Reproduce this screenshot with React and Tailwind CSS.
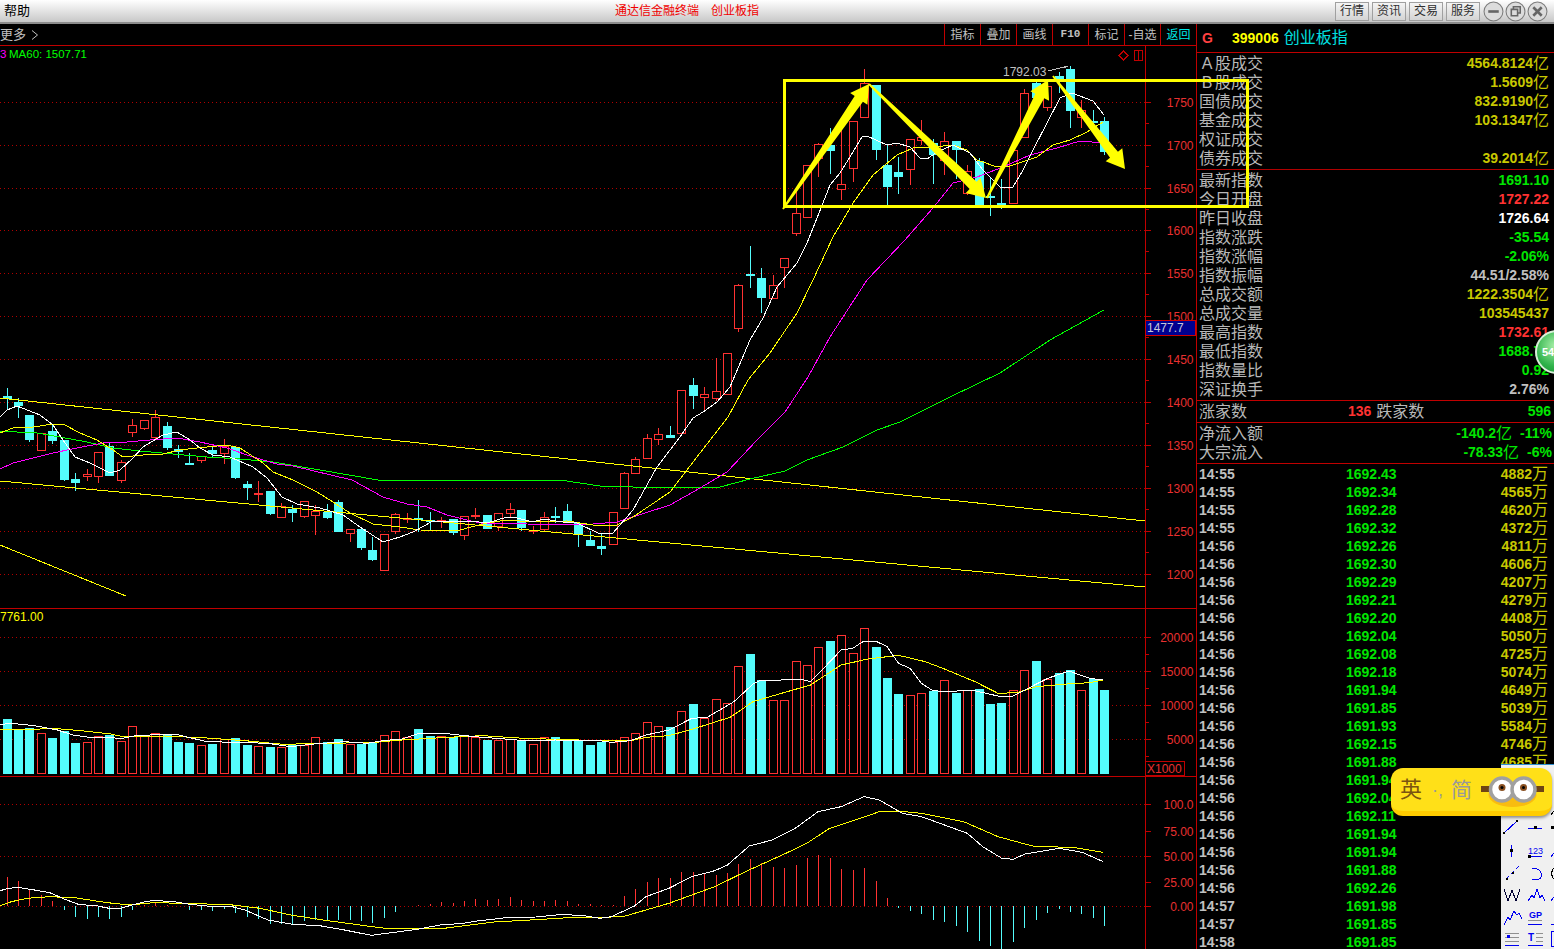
import React from 'react';

const RED = '#ff3232';
const CYAN = '#54fcfc';
const GRID = '#b00000';
const AXIS = '#c00000';
const CJK = "'Liberation Sans','Noto Sans CJK SC',sans-serif";

const X = (k) => Math.round(1104.3 - 11.435 * k) + 0.5;

// k counts from the newest candle: [colour, high, top, bottom, low] in page pixels
const CANDLES = [
  ['c', 117, 121, 152, 155], ['c', 110, 121, 122, 128], ['r', 100, 110, 117, 128], ['c', 66, 69, 111, 128],
  ['c', 72, 76, 79, 93], ['r', 84, 86, 107, 111], ['c', 80, 83, 98, 98], ['r', 89, 93, 137, 137],
  ['r', 150, 150, 203, 204], ['c', 179, 203, 205, 209], ['c', 178, 196, 198, 216], ['c', 158, 161, 205, 205],
  ['r', 165, 171, 193, 195], ['c', 141, 141, 150, 179], ['r', 132, 141, 160, 175], ['c', 139, 143, 155, 184],
  ['r', 120, 137, 140, 145], ['r', 139, 139, 169, 185], ['c', 157, 172, 177, 194], ['c', 145, 165, 187, 205],
  ['c', 85, 85, 150, 160], ['r', 69, 83, 117, 117], ['r', 121, 121, 168, 182], ['r', 127, 184, 189, 200],
  ['c', 128, 145, 151, 174], ['r', 143, 144, 158, 177], ['r', 165, 165, 217, 218], ['r', 188, 213, 233, 236],
  ['r', 258, 258, 267, 288], ['r', 275, 285, 298, 298], ['c', 268, 278, 298, 313], ['c', 246, 274, 276, 288],
  ['r', 284, 285, 328, 332], ['r', 353, 353, 394, 395], ['r', 358, 391, 398, 401], ['r', 387, 394, 397, 411],
  ['c', 378, 385, 396, 409], ['r', 390, 390, 433, 433], ['c', 426, 435, 438, 438], ['r', 428, 434, 439, 445],
  ['r', 434, 438, 458, 459], ['r', 457, 459, 473, 473], ['r', 472, 473, 508, 508], ['r', 512, 512, 544, 544],
  ['c', 533, 546, 549, 555], ['c', 531, 540, 546, 546], ['c', 523, 523, 535, 547], ['c', 504, 511, 523, 523],
  ['c', 507, 516, 517, 523], ['r', 512, 517, 529, 532], ['r', 526, 530, 531, 534], ['c', 510, 510, 528, 531],
  ['r', 503, 509, 513, 517], ['r', 513, 513, 526, 531], ['c', 515, 515, 529, 529], ['r', 508, 515, 516, 519],
  ['r', 516, 516, 535, 540], ['c', 519, 519, 533, 535], ['r', 517, 520, 521, 528], ['c', 512, 520, 521, 530],
  ['c', 500, 518, 519, 532], ['r', 513, 518, 519, 523], ['r', 513, 514, 531, 534], ['r', 534, 534, 570, 570],
  ['c', 537, 550, 560, 561], ['c', 529, 529, 548, 550], ['r', 529, 529, 533, 542], ['c', 500, 502, 532, 532],
  ['c', 504, 512, 518, 519], ['r', 505, 511, 515, 535], ['r', 501, 501, 516, 518], ['c', 505, 509, 513, 522],
  ['r', 503, 506, 517, 517], ['c', 491, 491, 514, 515], ['r', 481, 493, 494, 502], ['c', 481, 484, 488, 500],
  ['c', 446, 447, 478, 479], ['r', 439, 446, 453, 464], ['c', 446, 450, 454, 457], ['r', 456, 456, 460, 463],
  ['c', 453, 463, 464, 465], ['c', 445, 449, 452, 458], ['c', 422, 426, 448, 450], ['r', 410, 417, 437, 440],
  ['r', 420, 420, 428, 430], ['r', 419, 425, 432, 437], ['r', 460, 462, 480, 483], ['c', 443, 446, 476, 476],
  ['r', 452, 452, 476, 483], ['r', 469, 474, 476, 481], ['c', 473, 479, 483, 491], ['c', 440, 440, 480, 481],
  ['c', 425, 431, 441, 444], ['r', 433, 433, 450, 451], ['c', 415, 415, 440, 442], ['c', 398, 402, 406, 418],
  ['c', 388, 396, 399, 410],
];

const MA5 = [[0,417],[7,410],[17,406],[40,415],[53,425],[63,440],[75,457],[90,463],[110,473],[120,470],[133,458],[143,447],[163,435],[177,432],[190,440],[200,448],[213,455],[230,457],[253,467],[267,478],[282,497],[297,504],[320,508],[343,515],[360,527],[383,542],[400,537],[413,532],[433,521],[470,521],[487,523],[507,517],[517,518],[533,522],[543,519],[563,522],[577,523],[600,534],[613,533],[633,510],[657,467],[680,437],[693,418],[703,412],[717,402],[730,387],[750,340],[763,318],[777,287],[797,263],[807,243],[823,203],[830,185],[840,173],[850,157],[862,137],[867,136],[887,145],[897,143],[910,147],[920,158],[927,159],[937,152],[953,145],[970,153],[983,170],[1000,187],[1013,187],[1023,170],[1033,150],[1047,123],[1060,98],[1072,93],[1093,101],[1104,115]];
const MA10 = [[0,433],[13,428],[33,427],[53,424],[63,424],[80,433],[97,440],[113,450],[123,457],[143,455],[163,454],[180,450],[197,448],[227,445],[240,448],[263,463],[273,472],[293,480],[317,492],[333,502],[350,513],[373,524],[400,527],[420,530],[457,531],[467,528],[487,523],[507,520],[533,522],[567,521],[593,525],[617,525],[633,517],[670,492],[700,453],[728,417],[748,380],[770,353],[797,313],[813,280],[833,237],[853,203],[873,175],[897,155],[913,148],[933,147],[953,145],[967,150],[977,160],[997,167],[1010,166],[1037,157],[1053,145],[1070,140],[1087,132],[1103,122]];
const MA20 = [[0,469],[13,463],[33,458],[53,453],[77,448],[103,443],[127,442],[150,440],[177,438],[200,442],[227,448],[253,457],[277,464],[293,466],[352,480],[383,497],[407,504],[427,507],[447,515],[467,520],[480,523],[527,524],[567,525],[593,524],[617,522],[670,505],[700,488],[727,472],[757,440],[785,412],[808,377],[830,337],[867,280],[905,240],[933,208],[953,183],[977,177],[1003,167],[1030,155],[1057,148],[1080,141],[1103,143]];
const MA60 = [[0,431],[17,432],[37,433],[60,437],[87,442],[113,448],[140,451],[173,454],[207,457],[240,459],[273,462],[320,470],[378,480],[435,480],[481,480],[560,480],[600,486],[633,487],[720,487],[750,479],[785,471],[807,460],[843,447],[877,430],[900,422],[950,397],[1000,373],[1050,340],[1104,310]];

const VOLUME = [
  ['c',240],['c',207],['r',241],['c',180],['c',189],['r',207],['c',153],['r',181],['r',241],['c',279],['c',282],['c',238],
  ['r',241],['c',249],['r',211],['c',243],['r',250],['r',256],['c',252],['c',204],['c',111],['r',55],['r',130],['r',76],
  ['c',93],['r',112],['r',166],['r',154],['r',271],['r',271],['c',210],['c',132],['r',169],['r',280],['r',268],['r',325],
  ['c',282],['r',304],['c',351],['r',349],['r',337],['r',370],['r',382],['r',396],['c',395],['c',405],['c',389],['c',390],
  ['c',381],['r',382],['r',403],['c',393],['r',388],['r',391],['c',390],['r',381],['r',376],['c',381],['r',379],['c',378],
  ['c',357],['r',380],['r',364],['r',376],['c',398],['c',402],['r',402],['c',387],['c',396],['r',381],['r',405],['c',406],
  ['r',412],['c',411],['r',408],['c',405],['c',385],['r',386],['c',402],['r',405],['c',399],['c',396],['c',375],['r',370],
  ['r',376],['r',349],['r',393],['c',375],['r',378],['r',397],['c',399],['c',364],['c',384],['r',370],['c',354],['c',357],['c',327],
];

const HIST = [948,924,912,906,897,909,930,954,996,1017,1008,993,966,948,936,930,912,903,893,864,813,774,780,777,744,735,744,766,774,771,760,747,762,790,795,788,786,786,805,805,816,838,858,885,885,883,882,873,870,873,873,870,861,867,870,867,873,879,876,882,885,889,906,924,939,933,930,930,930,930,933,942,942,942,927,921,909,897,903,900,900,887,885,880,885,900,921,927,921,927,921,900,873,855,840,813,801];

// traced from 3x crops: left half starts at x 0, right half at x 600
const lower = (left, right) => [
  ...left.map(([x, y]) => [x / 2.613, 610 + y / 3]),
  ...right.map(([x, y]) => [600 + x / 2.613, 610 + y / 3]),
];

const VOL_MA5 = lower(
  [[0,345],[20,340],[60,343],[100,349],[150,360],[190,375],[240,383],[280,383],[320,385],[360,376],[460,373],[540,395],[620,397],[700,400],[760,410],[820,402],[900,395],[960,400],[1000,392],[1050,387],[1090,372],[1160,370],[1240,380],[1320,387],[1380,393],[1450,390]],
  [[0,392],[30,397],[80,392],[120,375],[180,360],[240,325],[280,322],[350,275],[400,222],[420,211],[530,209],[550,215],[580,180],[630,120],[660,115],[690,93],[720,93],[750,110],[780,160],[810,175],[840,220],[870,242],[910,245],[970,240],[1040,258],[1080,258],[1110,240],[1170,205],[1225,183],[1280,205],[1315,210]]
);
const VOL_MA10 = lower(
  [[0,358],[60,358],[150,356],[220,363],[290,372],[320,380],[430,378],[540,384],[640,392],[740,403],[840,400],[970,398],[1050,390],[1170,382],[1260,377],[1370,385]],
  [[0,392],[80,392],[120,382],[180,377],[240,358],[340,322],[400,275],[480,248],[550,225],[630,165],[700,147],[780,136],[850,155],[900,177],[980,215],[1040,250],[1090,248],[1140,230],[1220,222],[1280,218],[1315,210]]
);
const DIF = lower(
  [[0,842],[20,836],[45,832],[80,838],[130,848],[170,868],[205,883],[255,888],[285,895],[315,895],[345,885],[380,875],[405,871],[460,876],[490,882],[540,888],[600,888],[640,900],[700,930],[760,942],[840,948],[900,960],[970,976],[1010,970],[1090,958],[1150,945],[1210,940],[1240,934],[1330,922],[1400,921],[1470,913],[1530,918]],
  [[0,925],[30,920],[90,888],[120,860],[180,835],[240,800],[300,782],[333,765],[390,708],[450,690],[510,655],[570,605],[630,590],[690,560],[730,570],[790,610],[840,620],[900,645],[960,670],[1000,710],[1050,745],[1080,748],[1110,732],[1200,715],[1260,727],[1315,755]]
);
const DEA = lower(
  [[0,887],[30,875],[70,865],[130,860],[200,864],[280,878],[340,885],[400,878],[480,880],[600,884],[680,895],[760,915],[850,931],[960,948],[1020,957],[1160,955],[1290,936],[1400,929],[1500,922]],
  [[0,922],[60,920],[120,900],[180,880],[240,855],[300,830],[380,785],[480,733],[540,700],[600,655],[680,625],[730,605],[780,603],[840,610],[950,635],[1040,680],[1130,708],[1240,713],[1315,727]]
);

const pts = (list) => list.map((p) => p.join(',')).join(' ');

const Line = ({ data, color }) => (
  <polyline points={pts(data)} fill="none" stroke={color} strokeWidth="1" shapeRendering="crispEdges" />
);

const Dotted = ({ y }) => (
  <line x1="0" x2="1145" y1={y + 0.5} y2={y + 0.5} stroke={GRID} strokeWidth="1" strokeDasharray="1 3" shapeRendering="crispEdges" />
);

const AxisLabel = ({ y, children }) => (
  <text x="1193.5" y={y + 4.5} textAnchor="end" fontSize="12" fill="#e83030" fontFamily="'Liberation Sans',sans-serif">{children}</text>
);

const Tick = ({ y, long }) => (
  <line x1="1145" x2={long ? 1151 : 1149} y1={y + 0.5} y2={y + 0.5} stroke={AXIS} shapeRendering="crispEdges" />
);

const PRICE_AXIS = [
  ['1750', 102], ['1700', 145], ['1650', 188], ['1600', 230], ['1550', 273], ['1500', 316],
  ['1450', 359], ['1400', 402], ['1350', 445], ['1300', 488], ['1250', 531], ['1200', 574],
];

function PriceChart() {
  return (
    <svg viewBox="0 46 1196 562" className="block w-[1196px] h-[562px]">
      {PRICE_AXIS.map(([label, y], i) => (
        <g key={label}>
          <Dotted y={y} />
          <Tick y={y} long />
          {i < 11 && <Tick y={y + 21} />}
          <AxisLabel y={y}>{label}</AxisLabel>
        </g>
      ))}
      <Tick y={81} />
      <line x1="1145.5" x2="1145.5" y1="46" y2="608" stroke={AXIS} shapeRendering="crispEdges" />

      <rect x="1145.5" y="320.5" width="50" height="14.5" fill="#000090" stroke="#d00000" strokeWidth="1" shapeRendering="crispEdges" />
      <text x="1147" y="332" fontSize="12" fill="#c8c8d8" fontFamily="'Liberation Sans',sans-serif">1477.7</text>

      {CANDLES.map(([c, high, top, bottom, low], k) => {
        const x = X(k);
        const color = c === 'r' ? RED : CYAN;
        return (
          <g key={k} shapeRendering="crispEdges">
            <line x1={x} x2={x} y1={high} y2={top} stroke={color} />
            <line x1={x} x2={x} y1={bottom} y2={low} stroke={color} />
            {c === 'r' ? (
              <rect x={x - 4} y={top + 0.5} width="8" height={Math.max(bottom - top, 1)} fill="#000" stroke={color} />
            ) : (
              <rect x={x - 4.5} y={top} width="9" height={Math.max(bottom - top, 2)} fill={color} />
            )}
          </g>
        );
      })}

      <Line data={[[0, 398], [1145, 521]]} color="#ffff00" />
      <Line data={[[0, 481], [1145, 587]]} color="#ffff00" />
      <Line data={[[0, 545], [126, 596]]} color="#ffff00" />
      <Line data={MA60} color="#00ff00" />
      <Line data={MA20} color="#ff00ff" />
      <Line data={MA10} color="#ffff00" />
      <Line data={MA5} color="#ffffff" />

      <text x="0" y="58" fontSize="11.5" fill="#ff00ff" fontFamily="'Liberation Sans',sans-serif">3</text>
      <text x="9" y="58" fontSize="11.5" fill="#00ff00" fontFamily="'Liberation Sans',sans-serif">MA60: 1507.71</text>

      <path d="M1123.5 51 L1128 55.5 L1123.5 60 L1119 55.5 Z" fill="none" stroke="#c00000" shapeRendering="crispEdges" />
      <rect x="1134.5" y="50.5" width="8" height="10" fill="none" stroke="#c00000" shapeRendering="crispEdges" />
      <line x1="1138.5" x2="1138.5" y1="50" y2="61" stroke="#c00000" shapeRendering="crispEdges" />

      <text x="1003" y="76" fontSize="12" fill="#c0c0c0" fontFamily="'Liberation Sans',sans-serif">1792.03</text>
      <path d="M1048 71 L1060 68 L1068 66 L1064 68" fill="none" stroke="#c0c0c0" shapeRendering="crispEdges" />
    </svg>
  );
}

function VolumeChart() {
  return (
    <svg viewBox="0 609 1196 167" className="block w-[1196px] h-[167px]">
      {[637, 671, 705, 739].map((y) => <Dotted key={y} y={y} />)}
      {[['20000', 637], ['15000', 671], ['10000', 705], ['5000', 739]].map(([label, y]) => (
        <g key={label}>
          <Tick y={y} long />
          <Tick y={y + 17} />
          <AxisLabel y={y}>{label}</AxisLabel>
        </g>
      ))}
      <line x1="1145.5" x2="1145.5" y1="609" y2="776" stroke={AXIS} shapeRendering="crispEdges" />
      <rect x="1145.5" y="761.5" width="39" height="14" fill="none" stroke={AXIS} shapeRendering="crispEdges" />
      <text x="1147" y="773" fontSize="12" fill="#e83030" fontFamily="'Liberation Sans',sans-serif">X1000</text>

      {VOLUME.map(([c, z], k) => {
        const x = X(k);
        const top = Math.round(610 + z / 3);
        return c === 'r' ? (
          <rect key={k} x={x - 4} y={top + 0.5} width="8" height={773 - top} fill="#000" stroke={RED} shapeRendering="crispEdges" />
        ) : (
          <rect key={k} x={x - 4.5} y={top} width="9" height={774 - top} fill={CYAN} shapeRendering="crispEdges" />
        );
      })}
      <Line data={VOL_MA10} color="#ffff00" />
      <Line data={VOL_MA5} color="#ffffff" />
      <text x="0" y="621" fontSize="12" fill="#ffff00" fontFamily="'Liberation Sans',sans-serif">7761.00</text>
    </svg>
  );
}

function MacdChart() {
  return (
    <svg viewBox="0 777 1196 172" className="block w-[1196px] h-[172px]">
      {[804, 856, 906].map((y) => <Dotted key={y} y={y} />)}
      {[['100.0', 804], ['75.00', 831], ['50.00', 856], ['25.00', 882], ['0.00', 906]].map(([label, y]) => (
        <g key={label}>
          <Tick y={y} long />
          <AxisLabel y={y}>{label}</AxisLabel>
        </g>
      ))}
      <line x1="1145.5" x2="1145.5" y1="777" y2="949" stroke={AXIS} shapeRendering="crispEdges" />
      {HIST.map((z, k) => {
        const x = X(k);
        return (
          <line key={k} x1={x} x2={x} y1="906" y2={Math.round(610 + z / 3)} stroke={z < 889 ? RED : CYAN} shapeRendering="crispEdges" />
        );
      })}
      <Line data={DEA} color="#ffff00" />
      <Line data={DIF} color="#ffffff" />
    </svg>
  );
}

const TABS = ['指标', '叠加', '画线', '标记', '-自选'];

function Toolbar() {
  return (
    <div className="flex items-stretch h-[22px] border-b border-[#c00000] text-[12px] text-[#c0c0c0]" style={{ fontFamily: CJK }}>
      <div className="flex items-center gap-[5px] flex-1 text-[13px]">
        <span>更多</span>
        <svg width="8" height="10" viewBox="0 0 8 10"><path d="M1 0.5 L6.5 5 L1 9.5" fill="none" stroke="#c0c0c0" /></svg>
      </div>
      {TABS.slice(0, 3).map((t) => (
        <div key={t} className="flex items-center justify-center w-9 border-l border-[#c00000]">{t}</div>
      ))}
      <div className="flex items-center justify-center w-9 border-l border-[#c00000] text-[11px] font-bold" style={{ fontFamily: "'Liberation Mono',monospace" }}>F10</div>
      {TABS.slice(3).map((t) => (
        <div key={t} className="flex items-center justify-center w-9 border-l border-[#c00000]">{t}</div>
      ))}
      <div className="flex items-center justify-center w-9 border-l border-[#c00000] text-[#00e8e8]">返回</div>
    </div>
  );
}

const NUM = 'font-bold text-[14px]';
const C = { y: 'text-[#c8c800]', g: 'text-[#00e600]', r: 'text-[#ff3232]', w: 'text-white', s: 'text-[#c0c0c0]' };

const Row = ({ label, value, unit, color }) => (
  <div className="flex items-center justify-between h-[19px] pl-[2px] pr-[5px] leading-none">
    <span className="text-[16px] text-[#b8b8b8]">{label}</span>
    <span className={`${color} flex items-center`}>
      <span className={`${NUM} mb-[2px]`}>{value}</span>
      {unit && <span className="text-[16px]">{unit}</span>}
    </span>
  </div>
);

// the latin letter takes a full character cell in these two labels
const Wide = ({ children }) => <span className="inline-block w-4 text-center">{children}</span>;

const SUMMARY = [
  ['a', <><Wide>A</Wide>股成交</>, '4564.8124', '亿'], ['b', <><Wide>B</Wide>股成交</>, '1.5609', '亿'],
  ['gz', '国债成交', '832.9190', '亿'], ['jj', '基金成交', '103.1347', '亿'],
  ['qz', '权证成交', '', ''], ['zq', '债券成交', '39.2014', '亿'],
];

const QUOTES = [
  ['最新指数', '1691.10', 'g'], ['今日开盘', '1727.22', 'r'], ['昨日收盘', '1726.64', 'w'],
  ['指数涨跌', '-35.54', 'g'], ['指数涨幅', '-2.06%', 'g'], ['指数振幅', '44.51/2.58%', 's'],
  ['总成交额', '1222.3504', 'y', '亿'], ['总成交量', '103545437', 'y'], ['最高指数', '1732.61', 'r'],
  ['最低指数', '1688.72', 'g'], ['指数量比', '0.92', 'g'], ['深证换手', '2.76%', 's'],
];

const TICKS = [
  ['14:55', '1692.43', '4882'], ['14:55', '1692.34', '4565'], ['14:55', '1692.28', '4620'], ['14:55', '1692.32', '4372'],
  ['14:56', '1692.26', '4811'], ['14:56', '1692.30', '4606'], ['14:56', '1692.29', '4207'], ['14:56', '1692.21', '4279'],
  ['14:56', '1692.20', '4408'], ['14:56', '1692.04', '5050'], ['14:56', '1692.08', '4725'], ['14:56', '1692.18', '5074'],
  ['14:56', '1691.94', '4649'], ['14:56', '1691.85', '5039'], ['14:56', '1691.93', '5584'], ['14:56', '1692.15', '4746'],
  ['14:56', '1691.88', '4685'], ['14:56', '1691.94'], ['14:56', '1692.04'], ['14:56', '1692.11'],
  ['14:56', '1691.94'], ['14:56', '1691.94'], ['14:56', '1691.88'], ['14:56', '1692.26'],
  ['14:57', '1691.98'], ['14:57', '1691.85'], ['14:58', '1691.85'],
];

function QuotePanel() {
  return (
    <div className="flex-1 flex flex-col min-w-0" style={{ fontFamily: CJK }}>
      <div className="flex items-center h-[29px] border-b border-[#c00000] pl-[5px]">
        <span className="w-[30px] font-bold text-[14px] text-[#ff4040]">G</span>
        <span className="font-bold text-[14px] text-[#ffff00]">399006</span>
        <span className="ml-[5px] text-[16px] text-[#00e0e0]">创业板指</span>
      </div>
      <div className="h-[117px] pt-px border-b border-[#b00000]">
        {SUMMARY.map(([id, label, value, unit]) => (
          <Row key={id} label={label} value={value} unit={unit} color={C.y} />
        ))}
      </div>
      <div className="h-[231px] pt-px border-b border-[#c00000]">
        {QUOTES.map(([label, value, color, unit]) => (
          <Row key={label} label={label} value={value} unit={unit} color={C[color]} />
        ))}
      </div>
      <div className="flex items-center h-[22px] border-b border-[#c00000] pl-[2px] pr-[3px]">
        <span className="w-[149px] text-[16px] text-[#b8b8b8]">涨家数</span>
        <span className={`${NUM} ${C.r}`}>136</span>
        <span className="ml-[5px] text-[16px] text-[#b8b8b8]">跌家数</span>
        <span className={`${NUM} ${C.g} ml-auto`}>596</span>
      </div>
      <div className="h-[41px] pt-px border-b border-[#c00000]">
        {[['净流入额', '-140.2', '-11%'], ['大宗流入', '-78.33', '-6%']].map(([label, value, pct]) => (
          <div key={label} className="flex items-center h-[19px] pl-[2px] pr-[2px] leading-none">
            <span className="text-[16px] text-[#b8b8b8]">{label}</span>
            <span className={`${C.g} ml-auto flex items-center gap-2`}>
              <span className="flex items-center">
                <span className={`${NUM} mb-[2px]`}>{value}</span>
                <span className="text-[16px]">亿</span>
              </span>
              <span className={`${NUM} mb-[2px]`}>{pct}</span>
            </span>
          </div>
        ))}
      </div>
      <div className="flex-1 overflow-hidden pt-px">
        {TICKS.map(([time, price, vol], i) => (
          <div key={i} className="flex items-center h-[18px] pl-[2px] pr-[6px] leading-none">
            <span className={`${NUM} ${C.s} w-[147px]`}>{time}</span>
            <span className={`${NUM} ${C.g}`}>{price}</span>
            {vol && (
              <span className={`${C.y} ml-auto flex items-center`}>
                <span className={NUM}>{vol}</span>
                <span className="text-[16px]">万</span>
              </span>
            )}
          </div>
        ))}
      </div>
    </div>
  );
}

const BTNS = ['行情', '资讯', '交易', '服务'];

function TitleBar() {
  return (
    <div className="flex items-center h-6 border-b-2 border-[#8c8c8c] bg-gradient-to-b from-white to-[#c8c8c8] text-[13px] text-black" style={{ fontFamily: CJK }}>
      <span className="w-[615px] pl-1">帮助</span>
      <span className="text-[12px] text-[#f00000]">通达信金融终端</span>
      <span className="ml-3 text-[12px] text-[#f00000]">创业板指</span>
      <div className="ml-auto flex items-center gap-[3px] pr-[6px]">
        {BTNS.map((b) => (
          <span key={b} className="flex items-center justify-center w-[34px] h-[19px] border border-[#a0a0a0] bg-gradient-to-b from-[#f4f4f4] to-[#d4d4d4] text-[12px] text-[#303030]">{b}</span>
        ))}
        <div className="flex items-center gap-px">
          {['M5 10 H15', 'M6 8 H12 V14 H6 Z M8 8 V5.5 H14.5 V11.5 H12', 'M6 6 L14 14 M14 6 L6 14'].map((d, i) => (
            <svg key={i} width="21" height="21" viewBox="0 0 20 20">
              <circle cx="10" cy="10" r="9" fill="#dcdcdc" stroke="#7c7c7c" />
              <path d={d} fill="none" stroke="#666" strokeWidth={i === 1 ? 1.5 : 2.5} />
            </svg>
          ))}
        </div>
      </div>
    </div>
  );
}

// tapered hand-drawn arrow: narrow tail, widening shaft, broad head
const arrow = ([x1, y1], [x2, y2]) => {
  const len = Math.hypot(x2 - x1, y2 - y1);
  const dx = (x2 - x1) / len;
  const dy = (y2 - y1) / len;
  const nx = -dy;
  const ny = dx;
  const bx = x2 - dx * 18;
  const by = y2 - dy * 18;
  return pts([
    [x1 + nx * 1, y1 + ny * 1],
    [bx + nx * 5, by + ny * 5],
    [bx + nx * 10.5, by + ny * 10.5],
    [x2, y2],
    [bx - nx * 10.5, by - ny * 10.5],
    [bx - nx * 5, by - ny * 5],
    [x1 - nx * 1, y1 - ny * 1],
  ]);
};

const Annotations = () => (
  <svg className="absolute inset-0 pointer-events-none" width="1554" height="949" viewBox="0 0 1554 949">
    <rect x="784.5" y="80.5" width="463" height="126" fill="none" stroke="#ffff00" strokeWidth="3" shapeRendering="crispEdges" />
    <polygon points={arrow([783, 209], [869, 84])} fill="#ffff00" />
    <polygon points={arrow([869, 84], [986, 198])} fill="#ffff00" />
    <polygon points={arrow([987, 198], [1048, 80])} fill="#ffff00" />
    <polygon points={arrow([1053, 76], [1125, 169])} fill="#ffff00" />
  </svg>
);

const Ball = () => (
  <div className="absolute left-[1535px] top-[330px] w-11 h-11 rounded-full border-2 border-[#d8efd8] bg-[radial-gradient(circle_at_45%_35%,#a8f0a8,#2fb24a_60%,#178a30)] flex items-center pl-[5px]">
    <span className="text-[11px] font-bold text-white" style={{ fontFamily: "'Liberation Sans',sans-serif" }}>54</span>
  </div>
);

const DrawTools = () => (
  <div className="absolute left-[1501px] top-[764px] w-[53px] h-[185px] bg-[#f0f0f0] border-t border-[#3090d0]">
    <svg width="53" height="185" viewBox="0 0 53 185" fill="none" stroke="#0000f0" shapeRendering="crispEdges" className="block">
      <g>
        <path d="M3 68 L16 56" />
        <rect x="2" y="67" width="2" height="2" fill="#000" stroke="none" />
        <rect x="15" y="55" width="2" height="2" fill="#000" stroke="none" />
        <path d="M27 63 H41" />
        <rect x="33" y="61" width="3" height="3" fill="#000" stroke="none" />
        <rect x="50" y="61" width="3" height="3" fill="#000" stroke="none" />
        <path d="M50 50 L53 46" stroke="#000" />
      </g>
      <g>
        <path d="M10.5 80 V92" />
        <rect x="9" y="84" width="3" height="3" fill="#000" stroke="none" />
        <text x="27" y="89" fontSize="9" fill="#0000f0" stroke="none" fontFamily="'Liberation Sans',sans-serif">123</text>
        <path d="M27 91 H41" />
        <rect x="27" y="90" width="3" height="3" fill="#000" stroke="none" />
        <path d="M50 92 L53 88" />
      </g>
      <g>
        <path d="M5 114 L8 111 M10 109 L13 106 M15 104 L18 101" />
        <rect x="5" y="113" width="2" height="2" fill="#000" stroke="none" />
        <rect x="11" y="107" width="2" height="2" fill="#000" stroke="none" />
        <path d="M31 103 C38 103 42 108 40 112 C39 115 35 115 31 115" />
        <path d="M53 103 C50 105 50 112 53 114" stroke="#000" />
      </g>
      <g>
        <path d="M3 124 L7 136 L11 125 L15 136 L19 124" stroke="#003" />
        <path d="M27 136 L31 130 L33 133 L36 124 L39 133 L41 130 L44 136" />
        <path d="M50 136 L53 132" />
      </g>
      <g>
        <path d="M3 160 L7 152 L9 155 L13 146 L16 150 L18 148 L21 154" />
        <text x="28" y="153" fontSize="9" fontWeight="bold" fill="#0000f0" stroke="none" fontFamily="'Liberation Sans',sans-serif">GP</text>
        <path d="M27 155 H41" stroke="#909090" />
        <path d="M27 159 H41" />
        <path d="M50 159 H53" />
      </g>
      <g>
        <path d="M4 168 H18 M4 172 H18 M4 176 H18" stroke="#909090" />
        <path d="M4 180 H18" />
        <rect x="6" y="170" width="3" height="3" fill="#0000f0" stroke="none" />
        <text x="27" y="176" fontSize="10" fontWeight="bold" fill="#0000f0" stroke="none" fontFamily="'Liberation Sans',sans-serif">T</text>
        <path d="M35 168 H42 M35 172 H42 M35 176 H42" stroke="#909090" />
        <path d="M27 180 H42" />
        <path d="M53 166 H50 V181 H53" />
      </g>
    </svg>
  </div>
);

const Ime = () => (
  <div className="absolute left-[1391px] top-[768px] w-[161px] h-12 rounded-xl bg-[#ffe018] border-b-[5px] border-[#ffcc00] shadow-[0_2px_3px_rgba(0,0,0,0.4)] flex items-center" style={{ fontFamily: CJK }}>
    <span className="ml-[9px] text-[22px] leading-none text-[#7a5410]">英</span>
    <span className="ml-[10px] text-[18px] leading-none text-[#999]">·,</span>
    <span className="ml-[8px] text-[21px] leading-none text-[#999]">简</span>
    <svg className="ml-auto mr-[8px]" width="63" height="36" viewBox="0 0 63 36">
      <rect x="0" y="14" width="63" height="6" fill="#6e4414" />
      <ellipse cx="31.5" cy="23" rx="24" ry="12" fill="#f8bc10" />
      <circle cx="21" cy="17.5" r="11.5" fill="#fff" stroke="#a0a0a0" strokeWidth="3.5" />
      <circle cx="42.5" cy="17.5" r="11.5" fill="#fff" stroke="#a0a0a0" strokeWidth="3.5" />
      <circle cx="21" cy="15.5" r="3.5" fill="#8a5020" />
      <circle cx="42.5" cy="15.5" r="3.5" fill="#8a5020" />
      <circle cx="21" cy="15.5" r="1.5" fill="#000" />
      <circle cx="42.5" cy="15.5" r="1.5" fill="#000" />
    </svg>
  </div>
);

export default function App() {
  return (
    <div className="relative w-[1554px] h-[949px] overflow-hidden bg-black" style={{ fontFamily: CJK }}>
      <TitleBar />
      <div className="flex h-[925px]">
        <div className="w-[1197px] shrink-0 border-r border-[#c00000]">
          <Toolbar />
          <div className="border-b border-[#c00000]"><PriceChart /></div>
          <div className="border-b border-[#c00000]"><VolumeChart /></div>
          <MacdChart />
        </div>
        <QuotePanel />
      </div>
      <Annotations />
      <Ball />
      <DrawTools />
      <Ime />
    </div>
  );
}
